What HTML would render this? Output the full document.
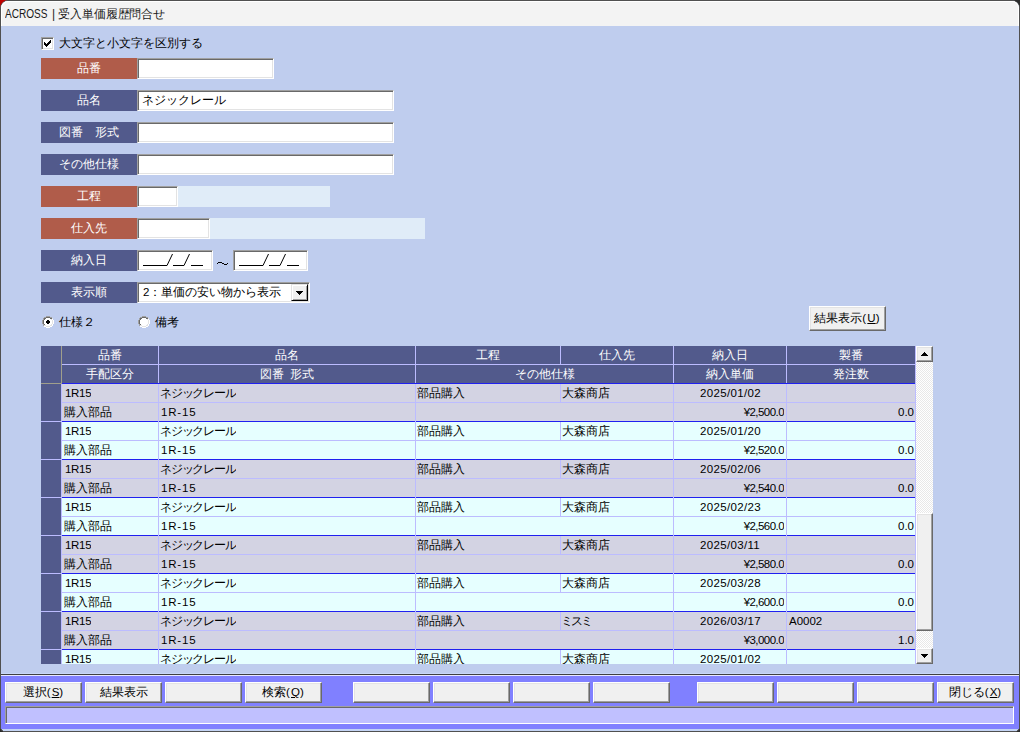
<!DOCTYPE html><html><head><meta charset="utf-8"><style>
*{box-sizing:border-box;margin:0;padding:0}
html,body{width:1020px;height:732px;overflow:hidden;background:#2b2b2b;font-family:"Liberation Sans",sans-serif;font-size:12px;color:#000;position:relative}
.a{position:absolute}
.m{font-size:11.5px}
.k{letter-spacing:-1.2px}
.lbl{position:absolute;left:41px;width:96px;height:21px;color:#fff;text-align:center;line-height:21px;font-size:12px;white-space:nowrap}
.lb{background:#525a8c}
.lr{background:#b05c4a}
.inp{position:absolute;height:21px;background:#fff;border-top:1px solid #a0a0a0;border-left:1px solid #a0a0a0;border-right:1px solid #fff;border-bottom:1px solid #fff;box-shadow:inset 1px 1px 0 #696969,inset -1px -1px 0 #e3e3e3;line-height:18px;padding-left:5px;white-space:nowrap}
.pan{position:absolute;height:21px;background:#e0ecf8}
.btn{position:absolute;height:21px;background:#f0f0f0;border-top:1px solid #fff;border-left:1px solid #fff;border-right:1px solid #696969;border-bottom:1px solid #696969;box-shadow:inset -1px -1px 0 #a0a0a0,inset 1px 1px 0 #e3e3e3;text-align:center;line-height:19px;white-space:nowrap}
.c{position:absolute;height:18px;line-height:18px;white-space:nowrap;overflow:hidden}
.hc{color:#fff;text-align:center}
svg{shape-rendering:crispEdges}
</style></head><body>
<div class="a" style="left:0;top:0;width:10px;height:10px;background:#c00000"></div>
<div class="a" style="left:0;top:0;width:1020px;height:732px;background:#bfcdee;border-radius:8px 8px 5px 5px;border:1px solid #505050"></div>
<div class="a" style="left:1px;top:1px;width:1018px;height:25px;background:#f3f3f3;border-radius:7px 7px 0 0;box-shadow:inset 1px 1px 0 #fff,inset -1px 0 0 #fff"></div>
<div class="a" style="left:5px;top:7px;font-size:12px;color:#1a1a1a;line-height:14px;transform:scaleX(.84);transform-origin:0 0">ACROSS</div>
<div class="a" style="left:52px;top:7px;font-size:12px;color:#1a1a1a;line-height:14px">|</div>
<div class="a" style="left:58px;top:7px;font-size:12px;color:#1a1a1a;line-height:14px;letter-spacing:-.1px">受入単価履歴問合せ</div>
<div class="a" style="left:41px;top:37px;width:13px;height:13px;background:#fff;border-top:1px solid #a0a0a0;border-left:1px solid #a0a0a0;border-right:1px solid #fff;border-bottom:1px solid #fff;box-shadow:inset 1px 1px 0 #696969,inset -1px -1px 0 #e3e3e3"></div>
<svg class="a" style="left:44px;top:40px" width="7" height="7"><rect x="6" y="0" width="1" height="1" fill="#000"/><rect x="5" y="1" width="1" height="1" fill="#000"/><rect x="6" y="1" width="1" height="1" fill="#000"/><rect x="0" y="2" width="1" height="1" fill="#000"/><rect x="4" y="2" width="1" height="1" fill="#000"/><rect x="5" y="2" width="1" height="1" fill="#000"/><rect x="6" y="2" width="1" height="1" fill="#000"/><rect x="0" y="3" width="1" height="1" fill="#000"/><rect x="1" y="3" width="1" height="1" fill="#000"/><rect x="3" y="3" width="1" height="1" fill="#000"/><rect x="4" y="3" width="1" height="1" fill="#000"/><rect x="5" y="3" width="1" height="1" fill="#000"/><rect x="0" y="4" width="1" height="1" fill="#000"/><rect x="1" y="4" width="1" height="1" fill="#000"/><rect x="2" y="4" width="1" height="1" fill="#000"/><rect x="3" y="4" width="1" height="1" fill="#000"/><rect x="4" y="4" width="1" height="1" fill="#000"/><rect x="1" y="5" width="1" height="1" fill="#000"/><rect x="2" y="5" width="1" height="1" fill="#000"/><rect x="3" y="5" width="1" height="1" fill="#000"/><rect x="2" y="6" width="1" height="1" fill="#000"/></svg>
<div class="a" style="left:59px;top:35px;line-height:16px">大文字と小文字を区別する</div>
<div class="lbl lr" style="top:58px">品番</div>
<div class="lbl lb" style="top:90px">品名</div>
<div class="lbl lb" style="top:122px">図番　形式</div>
<div class="lbl lb" style="top:154px">その他仕様</div>
<div class="lbl lr" style="top:186px">工程</div>
<div class="lbl lr" style="top:218px">仕入先</div>
<div class="lbl lb" style="top:250px">納入日</div>
<div class="lbl lb" style="top:282px">表示順</div>
<div class="inp" style="left:137px;top:58px;width:137px"></div>
<div class="inp" style="left:137px;top:90px;width:257px;padding-left:4px">ネジックレール</div>
<div class="inp" style="left:137px;top:122px;width:257px"></div>
<div class="inp" style="left:137px;top:154px;width:257px"></div>
<div class="inp" style="left:137px;top:186px;width:41px"></div>
<div class="pan" style="left:178px;top:186px;width:152px"></div>
<div class="inp" style="left:137px;top:218px;width:73px"></div>
<div class="pan" style="left:210px;top:218px;width:215px"></div>
<div class="inp" style="left:137px;top:250px;width:76px"></div>
<svg class="a" style="left:143px;top:252px;shape-rendering:auto" width="64" height="16"><path d="M0 13.5 H24 L29.5 2 M30 13.5 H41 L46.5 2 M48 13.5 H60" stroke="#000" stroke-width="1" fill="none"/></svg>
<svg class="a" style="left:217px;top:262px" width="11" height="3"><rect x="1" y="0" width="1" height="1" fill="#000"/><rect x="2" y="0" width="1" height="1" fill="#000"/><rect x="3" y="0" width="1" height="1" fill="#000"/><rect x="4" y="0" width="1" height="1" fill="#000"/><rect x="0" y="1" width="1" height="1" fill="#000"/><rect x="5" y="1" width="1" height="1" fill="#000"/><rect x="6" y="1" width="1" height="1" fill="#000"/><rect x="10" y="1" width="1" height="1" fill="#000"/><rect x="7" y="2" width="1" height="1" fill="#000"/><rect x="8" y="2" width="1" height="1" fill="#000"/><rect x="9" y="2" width="1" height="1" fill="#000"/></svg>
<div class="inp" style="left:233px;top:250px;width:75px"></div>
<svg class="a" style="left:239px;top:252px;shape-rendering:auto" width="64" height="16"><path d="M0 13.5 H24 L29.5 2 M30 13.5 H41 L46.5 2 M48 13.5 H60" stroke="#000" stroke-width="1" fill="none"/></svg>
<div class="inp" style="left:137px;top:282px;width:173px;padding-left:5px"><span class="m">2</span>：単価の安い物から表示</div>
<div class="a" style="left:291px;top:284px;width:17px;height:17px;background:#f0f0f0;border-top:1px solid #e3e3e3;border-left:1px solid #e3e3e3;border-right:1px solid #000;border-bottom:1px solid #000;box-shadow:inset 1px 1px 0 #fff,inset -1px -1px 0 #a0a0a0"></div>
<svg class="a" style="left:296px;top:291px" width="7" height="4"><rect x="0" y="0" width="1" height="1" fill="#000"/><rect x="1" y="0" width="1" height="1" fill="#000"/><rect x="2" y="0" width="1" height="1" fill="#000"/><rect x="3" y="0" width="1" height="1" fill="#000"/><rect x="4" y="0" width="1" height="1" fill="#000"/><rect x="5" y="0" width="1" height="1" fill="#000"/><rect x="6" y="0" width="1" height="1" fill="#000"/><rect x="1" y="1" width="1" height="1" fill="#000"/><rect x="2" y="1" width="1" height="1" fill="#000"/><rect x="3" y="1" width="1" height="1" fill="#000"/><rect x="4" y="1" width="1" height="1" fill="#000"/><rect x="5" y="1" width="1" height="1" fill="#000"/><rect x="2" y="2" width="1" height="1" fill="#000"/><rect x="3" y="2" width="1" height="1" fill="#000"/><rect x="4" y="2" width="1" height="1" fill="#000"/><rect x="3" y="3" width="1" height="1" fill="#000"/></svg>
<svg class="a" style="left:42px;top:316px" width="12" height="12"><rect x="4" y="0" width="1" height="1" fill="#a0a0a0"/><rect x="5" y="0" width="1" height="1" fill="#a0a0a0"/><rect x="6" y="0" width="1" height="1" fill="#a0a0a0"/><rect x="7" y="0" width="1" height="1" fill="#a0a0a0"/><rect x="2" y="1" width="1" height="1" fill="#a0a0a0"/><rect x="3" y="1" width="1" height="1" fill="#a0a0a0"/><rect x="4" y="1" width="1" height="1" fill="#696969"/><rect x="5" y="1" width="1" height="1" fill="#696969"/><rect x="6" y="1" width="1" height="1" fill="#696969"/><rect x="7" y="1" width="1" height="1" fill="#696969"/><rect x="8" y="1" width="1" height="1" fill="#a0a0a0"/><rect x="9" y="1" width="1" height="1" fill="#a0a0a0"/><rect x="1" y="2" width="1" height="1" fill="#a0a0a0"/><rect x="2" y="2" width="1" height="1" fill="#696969"/><rect x="3" y="2" width="1" height="1" fill="#696969"/><rect x="4" y="2" width="1" height="1" fill="#fff"/><rect x="5" y="2" width="1" height="1" fill="#fff"/><rect x="6" y="2" width="1" height="1" fill="#fff"/><rect x="7" y="2" width="1" height="1" fill="#fff"/><rect x="8" y="2" width="1" height="1" fill="#696969"/><rect x="9" y="2" width="1" height="1" fill="#696969"/><rect x="10" y="2" width="1" height="1" fill="#e3e3e3"/><rect x="1" y="3" width="1" height="1" fill="#a0a0a0"/><rect x="2" y="3" width="1" height="1" fill="#696969"/><rect x="3" y="3" width="1" height="1" fill="#fff"/><rect x="4" y="3" width="1" height="1" fill="#fff"/><rect x="5" y="3" width="1" height="1" fill="#fff"/><rect x="6" y="3" width="1" height="1" fill="#fff"/><rect x="7" y="3" width="1" height="1" fill="#fff"/><rect x="8" y="3" width="1" height="1" fill="#fff"/><rect x="9" y="3" width="1" height="1" fill="#e3e3e3"/><rect x="10" y="3" width="1" height="1" fill="#fff"/><rect x="0" y="4" width="1" height="1" fill="#a0a0a0"/><rect x="1" y="4" width="1" height="1" fill="#696969"/><rect x="2" y="4" width="1" height="1" fill="#fff"/><rect x="3" y="4" width="1" height="1" fill="#fff"/><rect x="4" y="4" width="1" height="1" fill="#fff"/><rect x="5" y="4" width="1" height="1" fill="#fff"/><rect x="6" y="4" width="1" height="1" fill="#fff"/><rect x="7" y="4" width="1" height="1" fill="#fff"/><rect x="8" y="4" width="1" height="1" fill="#fff"/><rect x="9" y="4" width="1" height="1" fill="#fff"/><rect x="10" y="4" width="1" height="1" fill="#e3e3e3"/><rect x="11" y="4" width="1" height="1" fill="#fff"/><rect x="0" y="5" width="1" height="1" fill="#a0a0a0"/><rect x="1" y="5" width="1" height="1" fill="#696969"/><rect x="2" y="5" width="1" height="1" fill="#fff"/><rect x="3" y="5" width="1" height="1" fill="#fff"/><rect x="4" y="5" width="1" height="1" fill="#fff"/><rect x="5" y="5" width="1" height="1" fill="#fff"/><rect x="6" y="5" width="1" height="1" fill="#fff"/><rect x="7" y="5" width="1" height="1" fill="#fff"/><rect x="8" y="5" width="1" height="1" fill="#fff"/><rect x="9" y="5" width="1" height="1" fill="#fff"/><rect x="10" y="5" width="1" height="1" fill="#e3e3e3"/><rect x="11" y="5" width="1" height="1" fill="#fff"/><rect x="0" y="6" width="1" height="1" fill="#a0a0a0"/><rect x="1" y="6" width="1" height="1" fill="#696969"/><rect x="2" y="6" width="1" height="1" fill="#fff"/><rect x="3" y="6" width="1" height="1" fill="#fff"/><rect x="4" y="6" width="1" height="1" fill="#fff"/><rect x="5" y="6" width="1" height="1" fill="#fff"/><rect x="6" y="6" width="1" height="1" fill="#fff"/><rect x="7" y="6" width="1" height="1" fill="#fff"/><rect x="8" y="6" width="1" height="1" fill="#fff"/><rect x="9" y="6" width="1" height="1" fill="#fff"/><rect x="10" y="6" width="1" height="1" fill="#e3e3e3"/><rect x="11" y="6" width="1" height="1" fill="#fff"/><rect x="0" y="7" width="1" height="1" fill="#a0a0a0"/><rect x="1" y="7" width="1" height="1" fill="#696969"/><rect x="2" y="7" width="1" height="1" fill="#fff"/><rect x="3" y="7" width="1" height="1" fill="#fff"/><rect x="4" y="7" width="1" height="1" fill="#fff"/><rect x="5" y="7" width="1" height="1" fill="#fff"/><rect x="6" y="7" width="1" height="1" fill="#fff"/><rect x="7" y="7" width="1" height="1" fill="#fff"/><rect x="8" y="7" width="1" height="1" fill="#fff"/><rect x="9" y="7" width="1" height="1" fill="#fff"/><rect x="10" y="7" width="1" height="1" fill="#e3e3e3"/><rect x="11" y="7" width="1" height="1" fill="#fff"/><rect x="1" y="8" width="1" height="1" fill="#a0a0a0"/><rect x="2" y="8" width="1" height="1" fill="#696969"/><rect x="3" y="8" width="1" height="1" fill="#fff"/><rect x="4" y="8" width="1" height="1" fill="#fff"/><rect x="5" y="8" width="1" height="1" fill="#fff"/><rect x="6" y="8" width="1" height="1" fill="#fff"/><rect x="7" y="8" width="1" height="1" fill="#fff"/><rect x="8" y="8" width="1" height="1" fill="#fff"/><rect x="9" y="8" width="1" height="1" fill="#e3e3e3"/><rect x="10" y="8" width="1" height="1" fill="#fff"/><rect x="1" y="9" width="1" height="1" fill="#a0a0a0"/><rect x="2" y="9" width="1" height="1" fill="#e3e3e3"/><rect x="3" y="9" width="1" height="1" fill="#e3e3e3"/><rect x="4" y="9" width="1" height="1" fill="#fff"/><rect x="5" y="9" width="1" height="1" fill="#fff"/><rect x="6" y="9" width="1" height="1" fill="#fff"/><rect x="7" y="9" width="1" height="1" fill="#fff"/><rect x="8" y="9" width="1" height="1" fill="#e3e3e3"/><rect x="9" y="9" width="1" height="1" fill="#e3e3e3"/><rect x="10" y="9" width="1" height="1" fill="#fff"/><rect x="2" y="10" width="1" height="1" fill="#fff"/><rect x="3" y="10" width="1" height="1" fill="#fff"/><rect x="4" y="10" width="1" height="1" fill="#e3e3e3"/><rect x="5" y="10" width="1" height="1" fill="#e3e3e3"/><rect x="6" y="10" width="1" height="1" fill="#e3e3e3"/><rect x="7" y="10" width="1" height="1" fill="#e3e3e3"/><rect x="8" y="10" width="1" height="1" fill="#fff"/><rect x="9" y="10" width="1" height="1" fill="#fff"/><rect x="4" y="11" width="1" height="1" fill="#fff"/><rect x="5" y="11" width="1" height="1" fill="#fff"/><rect x="6" y="11" width="1" height="1" fill="#fff"/><rect x="7" y="11" width="1" height="1" fill="#fff"/></svg>
<svg class="a" style="left:46px;top:320px" width="4" height="4"><rect x="1" y="0" width="1" height="1" fill="#000"/><rect x="2" y="0" width="1" height="1" fill="#000"/><rect x="0" y="1" width="1" height="1" fill="#000"/><rect x="1" y="1" width="1" height="1" fill="#000"/><rect x="2" y="1" width="1" height="1" fill="#000"/><rect x="3" y="1" width="1" height="1" fill="#000"/><rect x="0" y="2" width="1" height="1" fill="#000"/><rect x="1" y="2" width="1" height="1" fill="#000"/><rect x="2" y="2" width="1" height="1" fill="#000"/><rect x="3" y="2" width="1" height="1" fill="#000"/><rect x="1" y="3" width="1" height="1" fill="#000"/><rect x="2" y="3" width="1" height="1" fill="#000"/></svg>
<div class="a" style="left:59px;top:314px;line-height:16px">仕様２</div>
<svg class="a" style="left:138px;top:316px" width="12" height="12"><rect x="4" y="0" width="1" height="1" fill="#a0a0a0"/><rect x="5" y="0" width="1" height="1" fill="#a0a0a0"/><rect x="6" y="0" width="1" height="1" fill="#a0a0a0"/><rect x="7" y="0" width="1" height="1" fill="#a0a0a0"/><rect x="2" y="1" width="1" height="1" fill="#a0a0a0"/><rect x="3" y="1" width="1" height="1" fill="#a0a0a0"/><rect x="4" y="1" width="1" height="1" fill="#696969"/><rect x="5" y="1" width="1" height="1" fill="#696969"/><rect x="6" y="1" width="1" height="1" fill="#696969"/><rect x="7" y="1" width="1" height="1" fill="#696969"/><rect x="8" y="1" width="1" height="1" fill="#a0a0a0"/><rect x="9" y="1" width="1" height="1" fill="#a0a0a0"/><rect x="1" y="2" width="1" height="1" fill="#a0a0a0"/><rect x="2" y="2" width="1" height="1" fill="#696969"/><rect x="3" y="2" width="1" height="1" fill="#696969"/><rect x="4" y="2" width="1" height="1" fill="#fff"/><rect x="5" y="2" width="1" height="1" fill="#fff"/><rect x="6" y="2" width="1" height="1" fill="#fff"/><rect x="7" y="2" width="1" height="1" fill="#fff"/><rect x="8" y="2" width="1" height="1" fill="#696969"/><rect x="9" y="2" width="1" height="1" fill="#696969"/><rect x="10" y="2" width="1" height="1" fill="#e3e3e3"/><rect x="1" y="3" width="1" height="1" fill="#a0a0a0"/><rect x="2" y="3" width="1" height="1" fill="#696969"/><rect x="3" y="3" width="1" height="1" fill="#fff"/><rect x="4" y="3" width="1" height="1" fill="#fff"/><rect x="5" y="3" width="1" height="1" fill="#fff"/><rect x="6" y="3" width="1" height="1" fill="#fff"/><rect x="7" y="3" width="1" height="1" fill="#fff"/><rect x="8" y="3" width="1" height="1" fill="#fff"/><rect x="9" y="3" width="1" height="1" fill="#e3e3e3"/><rect x="10" y="3" width="1" height="1" fill="#fff"/><rect x="0" y="4" width="1" height="1" fill="#a0a0a0"/><rect x="1" y="4" width="1" height="1" fill="#696969"/><rect x="2" y="4" width="1" height="1" fill="#fff"/><rect x="3" y="4" width="1" height="1" fill="#fff"/><rect x="4" y="4" width="1" height="1" fill="#fff"/><rect x="5" y="4" width="1" height="1" fill="#fff"/><rect x="6" y="4" width="1" height="1" fill="#fff"/><rect x="7" y="4" width="1" height="1" fill="#fff"/><rect x="8" y="4" width="1" height="1" fill="#fff"/><rect x="9" y="4" width="1" height="1" fill="#fff"/><rect x="10" y="4" width="1" height="1" fill="#e3e3e3"/><rect x="11" y="4" width="1" height="1" fill="#fff"/><rect x="0" y="5" width="1" height="1" fill="#a0a0a0"/><rect x="1" y="5" width="1" height="1" fill="#696969"/><rect x="2" y="5" width="1" height="1" fill="#fff"/><rect x="3" y="5" width="1" height="1" fill="#fff"/><rect x="4" y="5" width="1" height="1" fill="#fff"/><rect x="5" y="5" width="1" height="1" fill="#fff"/><rect x="6" y="5" width="1" height="1" fill="#fff"/><rect x="7" y="5" width="1" height="1" fill="#fff"/><rect x="8" y="5" width="1" height="1" fill="#fff"/><rect x="9" y="5" width="1" height="1" fill="#fff"/><rect x="10" y="5" width="1" height="1" fill="#e3e3e3"/><rect x="11" y="5" width="1" height="1" fill="#fff"/><rect x="0" y="6" width="1" height="1" fill="#a0a0a0"/><rect x="1" y="6" width="1" height="1" fill="#696969"/><rect x="2" y="6" width="1" height="1" fill="#fff"/><rect x="3" y="6" width="1" height="1" fill="#fff"/><rect x="4" y="6" width="1" height="1" fill="#fff"/><rect x="5" y="6" width="1" height="1" fill="#fff"/><rect x="6" y="6" width="1" height="1" fill="#fff"/><rect x="7" y="6" width="1" height="1" fill="#fff"/><rect x="8" y="6" width="1" height="1" fill="#fff"/><rect x="9" y="6" width="1" height="1" fill="#fff"/><rect x="10" y="6" width="1" height="1" fill="#e3e3e3"/><rect x="11" y="6" width="1" height="1" fill="#fff"/><rect x="0" y="7" width="1" height="1" fill="#a0a0a0"/><rect x="1" y="7" width="1" height="1" fill="#696969"/><rect x="2" y="7" width="1" height="1" fill="#fff"/><rect x="3" y="7" width="1" height="1" fill="#fff"/><rect x="4" y="7" width="1" height="1" fill="#fff"/><rect x="5" y="7" width="1" height="1" fill="#fff"/><rect x="6" y="7" width="1" height="1" fill="#fff"/><rect x="7" y="7" width="1" height="1" fill="#fff"/><rect x="8" y="7" width="1" height="1" fill="#fff"/><rect x="9" y="7" width="1" height="1" fill="#fff"/><rect x="10" y="7" width="1" height="1" fill="#e3e3e3"/><rect x="11" y="7" width="1" height="1" fill="#fff"/><rect x="1" y="8" width="1" height="1" fill="#a0a0a0"/><rect x="2" y="8" width="1" height="1" fill="#696969"/><rect x="3" y="8" width="1" height="1" fill="#fff"/><rect x="4" y="8" width="1" height="1" fill="#fff"/><rect x="5" y="8" width="1" height="1" fill="#fff"/><rect x="6" y="8" width="1" height="1" fill="#fff"/><rect x="7" y="8" width="1" height="1" fill="#fff"/><rect x="8" y="8" width="1" height="1" fill="#fff"/><rect x="9" y="8" width="1" height="1" fill="#e3e3e3"/><rect x="10" y="8" width="1" height="1" fill="#fff"/><rect x="1" y="9" width="1" height="1" fill="#a0a0a0"/><rect x="2" y="9" width="1" height="1" fill="#e3e3e3"/><rect x="3" y="9" width="1" height="1" fill="#e3e3e3"/><rect x="4" y="9" width="1" height="1" fill="#fff"/><rect x="5" y="9" width="1" height="1" fill="#fff"/><rect x="6" y="9" width="1" height="1" fill="#fff"/><rect x="7" y="9" width="1" height="1" fill="#fff"/><rect x="8" y="9" width="1" height="1" fill="#e3e3e3"/><rect x="9" y="9" width="1" height="1" fill="#e3e3e3"/><rect x="10" y="9" width="1" height="1" fill="#fff"/><rect x="2" y="10" width="1" height="1" fill="#fff"/><rect x="3" y="10" width="1" height="1" fill="#fff"/><rect x="4" y="10" width="1" height="1" fill="#e3e3e3"/><rect x="5" y="10" width="1" height="1" fill="#e3e3e3"/><rect x="6" y="10" width="1" height="1" fill="#e3e3e3"/><rect x="7" y="10" width="1" height="1" fill="#e3e3e3"/><rect x="8" y="10" width="1" height="1" fill="#fff"/><rect x="9" y="10" width="1" height="1" fill="#fff"/><rect x="4" y="11" width="1" height="1" fill="#fff"/><rect x="5" y="11" width="1" height="1" fill="#fff"/><rect x="6" y="11" width="1" height="1" fill="#fff"/><rect x="7" y="11" width="1" height="1" fill="#fff"/></svg>
<div class="a" style="left:155px;top:314px;line-height:16px">備考</div>
<div class="btn" style="left:809px;top:306px;width:77px;height:25px;line-height:23px">結果表示<span class="m" style="letter-spacing:1.2px">(<u style="letter-spacing:0">U</u>)</span></div>
<div class="a" style="left:41px;top:346px;width:875px;height:38px;background:#525a8c"></div>
<div class="a" style="left:158px;top:346px;width:1px;height:18px;background:#bcbcff"></div>
<div class="a" style="left:415px;top:346px;width:1px;height:18px;background:#bcbcff"></div>
<div class="a" style="left:560px;top:346px;width:1px;height:18px;background:#bcbcff"></div>
<div class="a" style="left:673px;top:346px;width:1px;height:18px;background:#bcbcff"></div>
<div class="a" style="left:786px;top:346px;width:1px;height:18px;background:#bcbcff"></div>
<div class="a" style="left:915px;top:346px;width:1px;height:18px;background:#bcbcff"></div>
<div class="a" style="left:158px;top:365px;width:1px;height:18px;background:#bcbcff"></div>
<div class="a" style="left:415px;top:365px;width:1px;height:18px;background:#bcbcff"></div>
<div class="a" style="left:673px;top:365px;width:1px;height:18px;background:#bcbcff"></div>
<div class="a" style="left:786px;top:365px;width:1px;height:18px;background:#bcbcff"></div>
<div class="a" style="left:915px;top:365px;width:1px;height:18px;background:#bcbcff"></div>
<div class="a" style="left:62px;top:364px;width:854px;height:1px;background:#bcbcff"></div>
<div class="a" style="left:62px;top:383px;width:853px;height:1px;background:#2020f0"></div>
<div class="a" style="left:61px;top:346px;width:1px;height:37px;background:#a09f8c"></div>
<div class="a" style="left:41px;top:383px;width:21px;height:1px;background:#a09f8c"></div>
<div class="a" style="left:915px;top:383px;width:1px;height:1px;background:#bcbcff"></div>
<div class="c hc" style="left:62px;top:346px;width:96px">品番</div>
<div class="c hc" style="left:159px;top:346px;width:256px">品名</div>
<div class="c hc" style="left:416px;top:346px;width:144px">工程</div>
<div class="c hc" style="left:561px;top:346px;width:112px">仕入先</div>
<div class="c hc" style="left:674px;top:346px;width:112px">納入日</div>
<div class="c hc" style="left:787px;top:346px;width:128px">製番</div>
<div class="c hc" style="left:62px;top:365px;width:96px">手配区分</div>
<div class="c hc" style="left:159px;top:365px;width:256px">図番<span style='letter-spacing:3px'> </span>形式</div>
<div class="c hc" style="left:416px;top:365px;width:257px">その他仕様</div>
<div class="c hc" style="left:674px;top:365px;width:112px">納入単価</div>
<div class="c hc" style="left:787px;top:365px;width:128px">発注数</div>
<div class="a" style="left:41px;top:384px;width:875px;height:280px;overflow:hidden">
<div class="a" style="left:0;top:0px;width:875px;height:38px;background:#d3d3e3"></div>
<div class="a" style="left:0;top:0px;width:20px;height:37px;background:#525a8c"></div>
<div class="a" style="left:20px;top:0px;width:1px;height:38px;background:#bcbcff"></div>
<div class="a" style="left:21px;top:18px;width:854px;height:1px;background:#bcbcff"></div>
<div class="a" style="left:21px;top:37px;width:853px;height:1px;background:#2020f0"></div>
<div class="a" style="left:0;top:37px;width:21px;height:1px;background:#bcbcff"></div>
<div class="a" style="left:117px;top:0px;width:1px;height:38px;background:#bcbcff"></div>
<div class="a" style="left:374px;top:0px;width:1px;height:38px;background:#bcbcff"></div>
<div class="a" style="left:632px;top:0px;width:1px;height:38px;background:#bcbcff"></div>
<div class="a" style="left:745px;top:0px;width:1px;height:38px;background:#bcbcff"></div>
<div class="a" style="left:874px;top:0px;width:1px;height:38px;background:#bcbcff"></div>
<div class="a" style="left:519px;top:0px;width:1px;height:18px;background:#bcbcff"></div>
<div class="c m" style="left:24px;top:0px;letter-spacing:-.3px">1R15</div>
<div class="c k" style="left:119px;top:0px">ネジックレール</div>
<div class="c" style="left:376px;top:0px">部品購入</div>
<div class="c" style="left:521px;top:0px;letter-spacing:0">大森商店</div>
<div class="c m" style="left:659px;top:0px;letter-spacing:.33px">2025/01/02</div>
<div class="c" style="left:23px;top:19px">購入部品</div>
<div class="c m" style="left:120px;top:19px;letter-spacing:.8px">1R-15</div>
<div class="c m" style="left:633px;top:19px;width:110px;text-align:right;letter-spacing:-.55px">¥2,500.0</div>
<div class="c m" style="left:746px;top:19px;width:127px;text-align:right">0.0</div>
<div class="a" style="left:0;top:38px;width:875px;height:38px;background:#e6ffff"></div>
<div class="a" style="left:0;top:38px;width:20px;height:37px;background:#525a8c"></div>
<div class="a" style="left:20px;top:38px;width:1px;height:38px;background:#bcbcff"></div>
<div class="a" style="left:21px;top:56px;width:854px;height:1px;background:#bcbcff"></div>
<div class="a" style="left:21px;top:75px;width:853px;height:1px;background:#2020f0"></div>
<div class="a" style="left:0;top:75px;width:21px;height:1px;background:#bcbcff"></div>
<div class="a" style="left:117px;top:38px;width:1px;height:38px;background:#bcbcff"></div>
<div class="a" style="left:374px;top:38px;width:1px;height:38px;background:#bcbcff"></div>
<div class="a" style="left:632px;top:38px;width:1px;height:38px;background:#bcbcff"></div>
<div class="a" style="left:745px;top:38px;width:1px;height:38px;background:#bcbcff"></div>
<div class="a" style="left:874px;top:38px;width:1px;height:38px;background:#bcbcff"></div>
<div class="a" style="left:519px;top:38px;width:1px;height:18px;background:#bcbcff"></div>
<div class="c m" style="left:24px;top:38px;letter-spacing:-.3px">1R15</div>
<div class="c k" style="left:119px;top:38px">ネジックレール</div>
<div class="c" style="left:376px;top:38px">部品購入</div>
<div class="c" style="left:521px;top:38px;letter-spacing:0">大森商店</div>
<div class="c m" style="left:659px;top:38px;letter-spacing:.33px">2025/01/20</div>
<div class="c" style="left:23px;top:57px">購入部品</div>
<div class="c m" style="left:120px;top:57px;letter-spacing:.8px">1R-15</div>
<div class="c m" style="left:633px;top:57px;width:110px;text-align:right;letter-spacing:-.55px">¥2,520.0</div>
<div class="c m" style="left:746px;top:57px;width:127px;text-align:right">0.0</div>
<div class="a" style="left:0;top:76px;width:875px;height:38px;background:#d3d3e3"></div>
<div class="a" style="left:0;top:76px;width:20px;height:37px;background:#525a8c"></div>
<div class="a" style="left:20px;top:76px;width:1px;height:38px;background:#bcbcff"></div>
<div class="a" style="left:21px;top:94px;width:854px;height:1px;background:#bcbcff"></div>
<div class="a" style="left:21px;top:113px;width:853px;height:1px;background:#2020f0"></div>
<div class="a" style="left:0;top:113px;width:21px;height:1px;background:#bcbcff"></div>
<div class="a" style="left:117px;top:76px;width:1px;height:38px;background:#bcbcff"></div>
<div class="a" style="left:374px;top:76px;width:1px;height:38px;background:#bcbcff"></div>
<div class="a" style="left:632px;top:76px;width:1px;height:38px;background:#bcbcff"></div>
<div class="a" style="left:745px;top:76px;width:1px;height:38px;background:#bcbcff"></div>
<div class="a" style="left:874px;top:76px;width:1px;height:38px;background:#bcbcff"></div>
<div class="a" style="left:519px;top:76px;width:1px;height:18px;background:#bcbcff"></div>
<div class="c m" style="left:24px;top:76px;letter-spacing:-.3px">1R15</div>
<div class="c k" style="left:119px;top:76px">ネジックレール</div>
<div class="c" style="left:376px;top:76px">部品購入</div>
<div class="c" style="left:521px;top:76px;letter-spacing:0">大森商店</div>
<div class="c m" style="left:659px;top:76px;letter-spacing:.33px">2025/02/06</div>
<div class="c" style="left:23px;top:95px">購入部品</div>
<div class="c m" style="left:120px;top:95px;letter-spacing:.8px">1R-15</div>
<div class="c m" style="left:633px;top:95px;width:110px;text-align:right;letter-spacing:-.55px">¥2,540.0</div>
<div class="c m" style="left:746px;top:95px;width:127px;text-align:right">0.0</div>
<div class="a" style="left:0;top:114px;width:875px;height:38px;background:#e6ffff"></div>
<div class="a" style="left:0;top:114px;width:20px;height:37px;background:#525a8c"></div>
<div class="a" style="left:20px;top:114px;width:1px;height:38px;background:#bcbcff"></div>
<div class="a" style="left:21px;top:132px;width:854px;height:1px;background:#bcbcff"></div>
<div class="a" style="left:21px;top:151px;width:853px;height:1px;background:#2020f0"></div>
<div class="a" style="left:0;top:151px;width:21px;height:1px;background:#bcbcff"></div>
<div class="a" style="left:117px;top:114px;width:1px;height:38px;background:#bcbcff"></div>
<div class="a" style="left:374px;top:114px;width:1px;height:38px;background:#bcbcff"></div>
<div class="a" style="left:632px;top:114px;width:1px;height:38px;background:#bcbcff"></div>
<div class="a" style="left:745px;top:114px;width:1px;height:38px;background:#bcbcff"></div>
<div class="a" style="left:874px;top:114px;width:1px;height:38px;background:#bcbcff"></div>
<div class="a" style="left:519px;top:114px;width:1px;height:18px;background:#bcbcff"></div>
<div class="c m" style="left:24px;top:114px;letter-spacing:-.3px">1R15</div>
<div class="c k" style="left:119px;top:114px">ネジックレール</div>
<div class="c" style="left:376px;top:114px">部品購入</div>
<div class="c" style="left:521px;top:114px;letter-spacing:0">大森商店</div>
<div class="c m" style="left:659px;top:114px;letter-spacing:.33px">2025/02/23</div>
<div class="c" style="left:23px;top:133px">購入部品</div>
<div class="c m" style="left:120px;top:133px;letter-spacing:.8px">1R-15</div>
<div class="c m" style="left:633px;top:133px;width:110px;text-align:right;letter-spacing:-.55px">¥2,560.0</div>
<div class="c m" style="left:746px;top:133px;width:127px;text-align:right">0.0</div>
<div class="a" style="left:0;top:152px;width:875px;height:38px;background:#d3d3e3"></div>
<div class="a" style="left:0;top:152px;width:20px;height:37px;background:#525a8c"></div>
<div class="a" style="left:20px;top:152px;width:1px;height:38px;background:#bcbcff"></div>
<div class="a" style="left:21px;top:170px;width:854px;height:1px;background:#bcbcff"></div>
<div class="a" style="left:21px;top:189px;width:853px;height:1px;background:#2020f0"></div>
<div class="a" style="left:0;top:189px;width:21px;height:1px;background:#bcbcff"></div>
<div class="a" style="left:117px;top:152px;width:1px;height:38px;background:#bcbcff"></div>
<div class="a" style="left:374px;top:152px;width:1px;height:38px;background:#bcbcff"></div>
<div class="a" style="left:632px;top:152px;width:1px;height:38px;background:#bcbcff"></div>
<div class="a" style="left:745px;top:152px;width:1px;height:38px;background:#bcbcff"></div>
<div class="a" style="left:874px;top:152px;width:1px;height:38px;background:#bcbcff"></div>
<div class="a" style="left:519px;top:152px;width:1px;height:18px;background:#bcbcff"></div>
<div class="c m" style="left:24px;top:152px;letter-spacing:-.3px">1R15</div>
<div class="c k" style="left:119px;top:152px">ネジックレール</div>
<div class="c" style="left:376px;top:152px">部品購入</div>
<div class="c" style="left:521px;top:152px;letter-spacing:0">大森商店</div>
<div class="c m" style="left:659px;top:152px;letter-spacing:.33px">2025/03/11</div>
<div class="c" style="left:23px;top:171px">購入部品</div>
<div class="c m" style="left:120px;top:171px;letter-spacing:.8px">1R-15</div>
<div class="c m" style="left:633px;top:171px;width:110px;text-align:right;letter-spacing:-.55px">¥2,580.0</div>
<div class="c m" style="left:746px;top:171px;width:127px;text-align:right">0.0</div>
<div class="a" style="left:0;top:190px;width:875px;height:38px;background:#e6ffff"></div>
<div class="a" style="left:0;top:190px;width:20px;height:37px;background:#525a8c"></div>
<div class="a" style="left:20px;top:190px;width:1px;height:38px;background:#bcbcff"></div>
<div class="a" style="left:21px;top:208px;width:854px;height:1px;background:#bcbcff"></div>
<div class="a" style="left:21px;top:227px;width:853px;height:1px;background:#2020f0"></div>
<div class="a" style="left:0;top:227px;width:21px;height:1px;background:#bcbcff"></div>
<div class="a" style="left:117px;top:190px;width:1px;height:38px;background:#bcbcff"></div>
<div class="a" style="left:374px;top:190px;width:1px;height:38px;background:#bcbcff"></div>
<div class="a" style="left:632px;top:190px;width:1px;height:38px;background:#bcbcff"></div>
<div class="a" style="left:745px;top:190px;width:1px;height:38px;background:#bcbcff"></div>
<div class="a" style="left:874px;top:190px;width:1px;height:38px;background:#bcbcff"></div>
<div class="a" style="left:519px;top:190px;width:1px;height:18px;background:#bcbcff"></div>
<div class="c m" style="left:24px;top:190px;letter-spacing:-.3px">1R15</div>
<div class="c k" style="left:119px;top:190px">ネジックレール</div>
<div class="c" style="left:376px;top:190px">部品購入</div>
<div class="c" style="left:521px;top:190px;letter-spacing:0">大森商店</div>
<div class="c m" style="left:659px;top:190px;letter-spacing:.33px">2025/03/28</div>
<div class="c" style="left:23px;top:209px">購入部品</div>
<div class="c m" style="left:120px;top:209px;letter-spacing:.8px">1R-15</div>
<div class="c m" style="left:633px;top:209px;width:110px;text-align:right;letter-spacing:-.55px">¥2,600.0</div>
<div class="c m" style="left:746px;top:209px;width:127px;text-align:right">0.0</div>
<div class="a" style="left:0;top:228px;width:875px;height:38px;background:#d3d3e3"></div>
<div class="a" style="left:0;top:228px;width:20px;height:37px;background:#525a8c"></div>
<div class="a" style="left:20px;top:228px;width:1px;height:38px;background:#bcbcff"></div>
<div class="a" style="left:21px;top:246px;width:854px;height:1px;background:#bcbcff"></div>
<div class="a" style="left:21px;top:265px;width:853px;height:1px;background:#2020f0"></div>
<div class="a" style="left:0;top:265px;width:21px;height:1px;background:#bcbcff"></div>
<div class="a" style="left:117px;top:228px;width:1px;height:38px;background:#bcbcff"></div>
<div class="a" style="left:374px;top:228px;width:1px;height:38px;background:#bcbcff"></div>
<div class="a" style="left:632px;top:228px;width:1px;height:38px;background:#bcbcff"></div>
<div class="a" style="left:745px;top:228px;width:1px;height:38px;background:#bcbcff"></div>
<div class="a" style="left:874px;top:228px;width:1px;height:38px;background:#bcbcff"></div>
<div class="a" style="left:519px;top:228px;width:1px;height:18px;background:#bcbcff"></div>
<div class="c m" style="left:24px;top:228px;letter-spacing:-.3px">1R15</div>
<div class="c k" style="left:119px;top:228px">ネジックレール</div>
<div class="c" style="left:376px;top:228px">部品購入</div>
<div class="c" style="left:520px;top:228px;letter-spacing:-2px">ミスミ</div>
<div class="c m" style="left:659px;top:228px;letter-spacing:.33px">2026/03/17</div>
<div class="c m" style="left:748px;top:228px">A0002</div>
<div class="c" style="left:23px;top:247px">購入部品</div>
<div class="c m" style="left:120px;top:247px;letter-spacing:.8px">1R-15</div>
<div class="c m" style="left:633px;top:247px;width:110px;text-align:right;letter-spacing:-.55px">¥3,000.0</div>
<div class="c m" style="left:746px;top:247px;width:127px;text-align:right">1.0</div>
<div class="a" style="left:0;top:266px;width:875px;height:38px;background:#e6ffff"></div>
<div class="a" style="left:0;top:266px;width:20px;height:37px;background:#525a8c"></div>
<div class="a" style="left:20px;top:266px;width:1px;height:38px;background:#bcbcff"></div>
<div class="a" style="left:21px;top:284px;width:854px;height:1px;background:#bcbcff"></div>
<div class="a" style="left:21px;top:303px;width:853px;height:1px;background:#2020f0"></div>
<div class="a" style="left:0;top:303px;width:21px;height:1px;background:#bcbcff"></div>
<div class="a" style="left:117px;top:266px;width:1px;height:38px;background:#bcbcff"></div>
<div class="a" style="left:374px;top:266px;width:1px;height:38px;background:#bcbcff"></div>
<div class="a" style="left:632px;top:266px;width:1px;height:38px;background:#bcbcff"></div>
<div class="a" style="left:745px;top:266px;width:1px;height:38px;background:#bcbcff"></div>
<div class="a" style="left:874px;top:266px;width:1px;height:38px;background:#bcbcff"></div>
<div class="a" style="left:519px;top:266px;width:1px;height:18px;background:#bcbcff"></div>
<div class="c m" style="left:24px;top:266px;letter-spacing:-.3px">1R15</div>
<div class="c k" style="left:119px;top:266px">ネジックレール</div>
<div class="c" style="left:376px;top:266px">部品購入</div>
<div class="c" style="left:521px;top:266px;letter-spacing:0">大森商店</div>
<div class="c m" style="left:659px;top:266px;letter-spacing:.33px">2025/01/02</div>
<div class="c" style="left:23px;top:285px">購入部品</div>
<div class="c m" style="left:120px;top:285px;letter-spacing:.8px">1R-15</div>
</div>
<div class="a" style="left:916px;top:346px;width:17px;height:318px;background-color:#f4f4f4;background-image:repeating-conic-gradient(#ffffff 0 25%,#e8e8e8 0 50%);background-size:2px 2px"></div>
<div class="btn" style="left:916px;top:346px;width:17px;height:16px"></div>
<svg class="a" style="left:921px;top:352px" width="7" height="4"><rect x="3" y="0" width="1" height="1" fill="#000"/><rect x="2" y="1" width="1" height="1" fill="#000"/><rect x="3" y="1" width="1" height="1" fill="#000"/><rect x="4" y="1" width="1" height="1" fill="#000"/><rect x="1" y="2" width="1" height="1" fill="#000"/><rect x="2" y="2" width="1" height="1" fill="#000"/><rect x="3" y="2" width="1" height="1" fill="#000"/><rect x="4" y="2" width="1" height="1" fill="#000"/><rect x="5" y="2" width="1" height="1" fill="#000"/><rect x="0" y="3" width="1" height="1" fill="#000"/><rect x="1" y="3" width="1" height="1" fill="#000"/><rect x="2" y="3" width="1" height="1" fill="#000"/><rect x="3" y="3" width="1" height="1" fill="#000"/><rect x="4" y="3" width="1" height="1" fill="#000"/><rect x="5" y="3" width="1" height="1" fill="#000"/><rect x="6" y="3" width="1" height="1" fill="#000"/></svg>
<div class="btn" style="left:916px;top:513px;width:17px;height:118px"></div>
<div class="btn" style="left:916px;top:648px;width:17px;height:16px"></div>
<svg class="a" style="left:921px;top:654px" width="7" height="4"><rect x="0" y="0" width="1" height="1" fill="#000"/><rect x="1" y="0" width="1" height="1" fill="#000"/><rect x="2" y="0" width="1" height="1" fill="#000"/><rect x="3" y="0" width="1" height="1" fill="#000"/><rect x="4" y="0" width="1" height="1" fill="#000"/><rect x="5" y="0" width="1" height="1" fill="#000"/><rect x="6" y="0" width="1" height="1" fill="#000"/><rect x="1" y="1" width="1" height="1" fill="#000"/><rect x="2" y="1" width="1" height="1" fill="#000"/><rect x="3" y="1" width="1" height="1" fill="#000"/><rect x="4" y="1" width="1" height="1" fill="#000"/><rect x="5" y="1" width="1" height="1" fill="#000"/><rect x="2" y="2" width="1" height="1" fill="#000"/><rect x="3" y="2" width="1" height="1" fill="#000"/><rect x="4" y="2" width="1" height="1" fill="#000"/><rect x="3" y="3" width="1" height="1" fill="#000"/></svg>
<div class="a" style="left:1px;top:673px;width:1018px;height:1px;background:#c8d8f8"></div>
<div class="a" style="left:1px;top:674px;width:1018px;height:1px;background:#404040"></div>
<div class="a" style="left:1px;top:675px;width:1018px;height:1px;background:#e8e8ff"></div>
<div class="a" style="left:1px;top:676px;width:1018px;height:53px;background:#8080ff"></div>
<div class="a" style="left:3px;top:729px;width:1014px;height:2px;background:#c4d4f4"></div>
<div class="btn" style="left:5px;top:682px;width:77px">選択<span class='m' style='letter-spacing:1.2px'>(<u style='letter-spacing:0'>S</u>)</span></div>
<div class="btn" style="left:85px;top:682px;width:77px">結果表示</div>
<div class="btn" style="left:165px;top:682px;width:77px"></div>
<div class="btn" style="left:245px;top:682px;width:77px">検索<span class='m' style='letter-spacing:1.2px'>(<u style='letter-spacing:0'>Q</u>)</span></div>
<div class="btn" style="left:353px;top:682px;width:77px"></div>
<div class="btn" style="left:433px;top:682px;width:77px"></div>
<div class="btn" style="left:513px;top:682px;width:77px"></div>
<div class="btn" style="left:593px;top:682px;width:77px"></div>
<div class="btn" style="left:697px;top:682px;width:77px"></div>
<div class="btn" style="left:777px;top:682px;width:77px"></div>
<div class="btn" style="left:857px;top:682px;width:77px"></div>
<div class="btn" style="left:937px;top:682px;width:77px">閉じる<span class='m' style='letter-spacing:1.2px'>(<u style='letter-spacing:0'>X</u>)</span></div>
<div class="a" style="left:5px;top:706px;width:1009px;height:18px;background:#c0c0ff;border-top:1px solid #a0a0a0;border-left:1px solid #a0a0a0;border-right:1px solid #fff;border-bottom:1px solid #fff;box-shadow:inset 1px 1px 0 #696969"></div>
</body></html>
